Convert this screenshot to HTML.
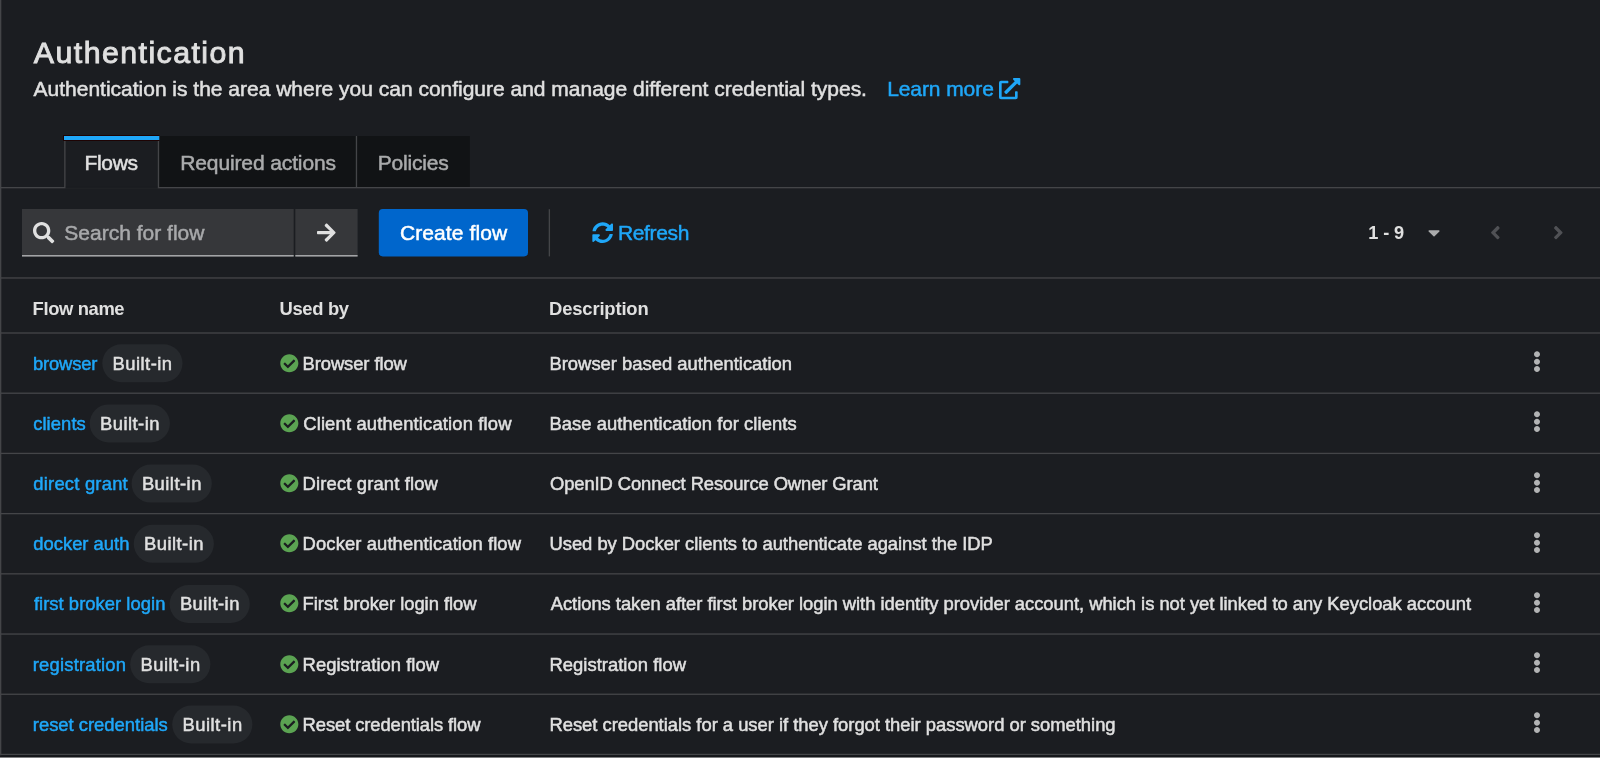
<!DOCTYPE html>
<html lang="en"><head><meta charset="utf-8"><title>Authentication</title>
<style>
html,body{margin:0;padding:0;background:#1b1d21;}
body{width:1600px;height:758px;position:relative;overflow:hidden;font-family:"Liberation Sans",sans-serif;}
.t{position:absolute;display:block;margin:0;white-space:nowrap;will-change:transform;}
.r{position:absolute;}
svg{display:block;overflow:visible}
</style></head><body>
<svg style="position:absolute;left:0;top:0" width="1600" height="758" viewBox="0 0 1600 758">
<rect x="0.00" y="0.00" width="1.33" height="758.00" fill="#444548"/>
<rect x="159.20" y="136.00" width="310.60" height="51.20" fill="#111315"/>
<rect x="0.00" y="187.00" width="1600.00" height="1.33" fill="#444548"/>
<rect x="64.20" y="136.00" width="1.33" height="52.00" fill="#444548"/>
<rect x="157.80" y="136.00" width="1.33" height="52.00" fill="#444548"/>
<rect x="355.80" y="136.00" width="1.33" height="51.00" fill="#444548"/>
<rect x="65.50" y="186.80" width="92.30" height="1.80" fill="#1b1d21"/>
<rect x="63.00" y="135.00" width="96.30" height="6.00" fill="#1e0303"/>
<rect x="64.00" y="136.00" width="95.30" height="4.00" fill="#1fa7f8"/>
<rect x="22.00" y="209.00" width="271.70" height="47.50" fill="#36373a"/>
<rect x="22.00" y="255.10" width="271.70" height="1.40" fill="#b0b1b3"/>
<rect x="295.30" y="209.00" width="62.30" height="47.50" fill="#36373a"/>
<rect x="295.30" y="255.10" width="62.30" height="1.40" fill="#b0b1b3"/>
<rect x="378.80" y="208.90" width="149.20" height="47.50" fill="#0066cc" rx="4"/>
<rect x="548.70" y="209.20" width="1.33" height="47.20" fill="#444548"/>
<rect x="0.00" y="277.30" width="1600.00" height="1.33" fill="#444548"/>
<rect x="0.00" y="332.33" width="1600.00" height="1.33" fill="#444548"/>
<rect x="0.00" y="392.54" width="1600.00" height="1.33" fill="#444548"/>
<rect x="0.00" y="452.75" width="1600.00" height="1.33" fill="#444548"/>
<rect x="0.00" y="512.96" width="1600.00" height="1.33" fill="#444548"/>
<rect x="0.00" y="573.17" width="1600.00" height="1.33" fill="#444548"/>
<rect x="0.00" y="633.38" width="1600.00" height="1.33" fill="#444548"/>
<rect x="0.00" y="693.59" width="1600.00" height="1.33" fill="#444548"/>
<rect x="0.00" y="753.80" width="1600.00" height="1.33" fill="#444548"/>
<rect x="102.30" y="344.20" width="80.20" height="38.00" fill="#26292d" rx="19"/>
<rect x="89.70" y="404.41" width="80.20" height="38.00" fill="#26292d" rx="19"/>
<rect x="131.60" y="464.62" width="80.20" height="38.00" fill="#26292d" rx="19"/>
<rect x="133.70" y="524.83" width="80.20" height="38.00" fill="#26292d" rx="19"/>
<rect x="169.60" y="585.04" width="80.20" height="38.00" fill="#26292d" rx="19"/>
<rect x="130.20" y="645.25" width="80.20" height="38.00" fill="#26292d" rx="19"/>
<rect x="172.20" y="705.46" width="80.20" height="38.00" fill="#26292d" rx="19"/>
<rect x="0.00" y="755.30" width="1600.00" height="1.80" fill="#15161a"/>
<rect x="0.00" y="757.00" width="1600.00" height="1.00" fill="#7d7e80"/>
</svg>
<svg style="position:absolute;left:32.70px;top:221.70px" width="21.33" height="21.33" viewBox="0 0 512 512"><path fill="#e0e0e0" d="M505 442.7L405.3 343c-4.5-4.5-10.6-7-17-7H372c27.6-35.3 44-79.700 44-128C416 93.100 322.900 0 208 0S0 93.100 0 208s93.100 208 208 208c48.300 0 92.700-16.400 128-44v16.300c0 6.400 2.500 12.500 7 17l99.700 99.700c9.400 9.400 24.600 9.400 33.900 0l28.300-28.300c9.400-9.400 9.400-24.600.1-34zM208 336c-70.700 0-128-57.200-128-128 0-70.700 57.200-128 128-128 70.700 0 128 57.200 128 128 0 70.700-57.200 128-128 128z"/></svg>
<svg style="position:absolute;left:316.80px;top:221.50px" width="18.67" height="21.33" viewBox="0 0 448 512"><path fill="#e0e0e0" d="M190.5 66.9l22.200-22.200c9.400-9.400 24.600-9.400 33.900 0L441 239c9.400 9.400 9.400 24.600 0 33.900L246.600 467.300c-9.400 9.400-24.600 9.400-33.900 0l-22.200-22.200c-9.500-9.500-9.300-25 .4-34.300L311.400 296H24c-13.300 0-24-10.700-24-24v-32c0-13.300 10.700-24 24-24h287.400L190.900 101.200c-9.800-9.300-10-24.800-.4-34.300z"/></svg>
<svg style="position:absolute;left:591.70px;top:222.00px" width="21.33" height="21.33" viewBox="0 0 512 512"><path fill="#1fa7f8" d="M370.72 133.28C339.458 104.008 298.888 87.962 255.848 88c-77.458.068-144.328 53.178-162.791 126.850-1.344 5.363-6.122 9.150-11.651 9.150H24.103c-7.498 0-13.194-6.807-11.807-14.176C33.933 94.924 134.813 8 256 8c66.448 0 126.791 26.136 171.315 68.685L463.030 40.970C478.149 25.851 504 36.559 504 57.941V192c0 13.255-10.745 24-24 24H345.941c-21.382 0-32.090-25.851-16.971-40.971l41.750-41.749zM32 296h134.059c21.382 0 32.090 25.851 16.971 40.971l-41.750 41.750c31.262 29.273 71.835 45.319 114.876 45.280 77.418-.070 144.315-53.144 162.787-126.849 1.344-5.363 6.122-9.150 11.651-9.150h57.304c7.498 0 13.194 6.807 11.807 14.176C478.067 417.076 377.187 504 256 504c-66.448 0-126.791-26.136-171.315-68.685L48.970 471.030C33.851 486.149 8 475.441 8 454.059V320c0-13.255 10.745-24 24-24z"/></svg>
<svg style="position:absolute;left:998.80px;top:77.60px" width="21.33" height="21.33" viewBox="0 0 512 512"><path fill="#1fa7f8" d="M432 320H400a16 16 0 0 0-16 16V448H64V128H208a16 16 0 0 0 16-16V80a16 16 0 0 0-16-16H48A48 48 0 0 0 0 112V464a48 48 0 0 0 48 48H400a48 48 0 0 0 48-48V336A16 16 0 0 0 432 320ZM488 0h-128c-21.370 0-32.050 25.910-17 41l35.730 35.730L135 320.370a24 24 0 0 0 0 34L157.670 377a24 24 0 0 0 34 0L435.280 133.320 471 169c15 15 41 4.500 41-17V24A24 24 0 0 0 488 0Z"/></svg>
<svg style="position:absolute;left:1427.75px;top:222.90px" width="12.06" height="19.30" viewBox="0 0 320 512"><path fill="#aaabac" d="M31.300 192h257.300c17.800 0 26.700 21.500 14.100 34.100L174.100 354.800c-7.800 7.800-20.500 7.800-28.300 0L17.200 226.100C4.600 213.500 13.500 192 31.300 192z"/></svg>
<svg style="position:absolute;left:1490.00px;top:222.00px" width="10.67" height="21.33" viewBox="0 0 256 512"><path fill="#505155" d="M31.700 239l136-136c9.400-9.400 24.600-9.400 33.900 0l22.600 22.600c9.400 9.400 9.400 24.600 0 33.900L127.900 256l96.400 96.400c9.400 9.400 9.400 24.600 0 33.900L201.700 409c-9.400 9.400-24.600 9.400-33.900 0l-136-136c-9.500-9.400-9.500-24.600-.1-34z"/></svg>
<svg style="position:absolute;left:1552.60px;top:222.00px" width="10.67" height="21.33" viewBox="0 0 256 512"><path fill="#505155" d="M224.300 273l-136 136c-9.400 9.400-24.600 9.400-33.900 0l-22.600-22.600c-9.400-9.400-9.400-24.600 0-33.900l96.400-96.400-96.400-96.400c-9.400-9.400-9.400-24.600 0-33.900L54.300 103c9.400-9.400 24.600-9.400 33.900 0l136 136c9.500 9.400 9.500 24.600.1 34z"/></svg>
<svg style="position:absolute;left:279.60px;top:353.60px" width="18.67" height="18.67" viewBox="0 0 512 512"><path fill="#5ba352" d="M504 256c0 136.967-111.033 248-248 248S8 392.967 8 256 119.033 8 256 8s248 111.033 248 248zM227.314 387.314l184-184c6.248-6.248 6.248-16.379 0-22.627l-22.627-22.627c-6.248-6.249-16.379-6.249-22.628 0L216 308.118l-70.059-70.059c-6.248-6.248-16.379-6.248-22.628 0l-22.627 22.627c-6.248 6.248-6.248 16.379 0 22.627l104 104c6.249 6.249 16.379 6.249 22.628.001z"/></svg>
<svg style="position:absolute;left:1533.10px;top:351.20px" width="8.00" height="21.33" viewBox="0 0 192 512"><path fill="#b2b3b4" d="M96 184c39.800 0 72 32.200 72 72s-32.200 72-72 72-72-32.200-72-72 32.200-72 72-72zM24 80c0 39.800 32.200 72 72 72s72-32.200 72-72S135.800 8 96 8 24 40.200 24 80zm0 352c0 39.800 32.200 72 72 72s72-32.200 72-72-32.200-72-72-72-72 32.200-72 72z"/></svg>
<svg style="position:absolute;left:279.60px;top:413.81px" width="18.67" height="18.67" viewBox="0 0 512 512"><path fill="#5ba352" d="M504 256c0 136.967-111.033 248-248 248S8 392.967 8 256 119.033 8 256 8s248 111.033 248 248zM227.314 387.314l184-184c6.248-6.248 6.248-16.379 0-22.627l-22.627-22.627c-6.248-6.249-16.379-6.249-22.628 0L216 308.118l-70.059-70.059c-6.248-6.248-16.379-6.248-22.628 0l-22.627 22.627c-6.248 6.248-6.248 16.379 0 22.627l104 104c6.249 6.249 16.379 6.249 22.628.001z"/></svg>
<svg style="position:absolute;left:1533.10px;top:411.41px" width="8.00" height="21.33" viewBox="0 0 192 512"><path fill="#b2b3b4" d="M96 184c39.800 0 72 32.200 72 72s-32.200 72-72 72-72-32.200-72-72 32.200-72 72-72zM24 80c0 39.800 32.200 72 72 72s72-32.200 72-72S135.800 8 96 8 24 40.200 24 80zm0 352c0 39.800 32.200 72 72 72s72-32.200 72-72-32.200-72-72-72-72 32.200-72 72z"/></svg>
<svg style="position:absolute;left:279.60px;top:474.02px" width="18.67" height="18.67" viewBox="0 0 512 512"><path fill="#5ba352" d="M504 256c0 136.967-111.033 248-248 248S8 392.967 8 256 119.033 8 256 8s248 111.033 248 248zM227.314 387.314l184-184c6.248-6.248 6.248-16.379 0-22.627l-22.627-22.627c-6.248-6.249-16.379-6.249-22.628 0L216 308.118l-70.059-70.059c-6.248-6.248-16.379-6.248-22.628 0l-22.627 22.627c-6.248 6.248-6.248 16.379 0 22.627l104 104c6.249 6.249 16.379 6.249 22.628.001z"/></svg>
<svg style="position:absolute;left:1533.10px;top:471.62px" width="8.00" height="21.33" viewBox="0 0 192 512"><path fill="#b2b3b4" d="M96 184c39.800 0 72 32.200 72 72s-32.200 72-72 72-72-32.200-72-72 32.200-72 72-72zM24 80c0 39.800 32.200 72 72 72s72-32.200 72-72S135.800 8 96 8 24 40.200 24 80zm0 352c0 39.800 32.200 72 72 72s72-32.200 72-72-32.200-72-72-72-72 32.200-72 72z"/></svg>
<svg style="position:absolute;left:279.60px;top:534.23px" width="18.67" height="18.67" viewBox="0 0 512 512"><path fill="#5ba352" d="M504 256c0 136.967-111.033 248-248 248S8 392.967 8 256 119.033 8 256 8s248 111.033 248 248zM227.314 387.314l184-184c6.248-6.248 6.248-16.379 0-22.627l-22.627-22.627c-6.248-6.249-16.379-6.249-22.628 0L216 308.118l-70.059-70.059c-6.248-6.248-16.379-6.248-22.628 0l-22.627 22.627c-6.248 6.248-6.248 16.379 0 22.627l104 104c6.249 6.249 16.379 6.249 22.628.001z"/></svg>
<svg style="position:absolute;left:1533.10px;top:531.83px" width="8.00" height="21.33" viewBox="0 0 192 512"><path fill="#b2b3b4" d="M96 184c39.800 0 72 32.200 72 72s-32.200 72-72 72-72-32.200-72-72 32.200-72 72-72zM24 80c0 39.800 32.200 72 72 72s72-32.200 72-72S135.800 8 96 8 24 40.200 24 80zm0 352c0 39.800 32.200 72 72 72s72-32.200 72-72-32.200-72-72-72-72 32.200-72 72z"/></svg>
<svg style="position:absolute;left:279.60px;top:594.44px" width="18.67" height="18.67" viewBox="0 0 512 512"><path fill="#5ba352" d="M504 256c0 136.967-111.033 248-248 248S8 392.967 8 256 119.033 8 256 8s248 111.033 248 248zM227.314 387.314l184-184c6.248-6.248 6.248-16.379 0-22.627l-22.627-22.627c-6.248-6.249-16.379-6.249-22.628 0L216 308.118l-70.059-70.059c-6.248-6.248-16.379-6.248-22.628 0l-22.627 22.627c-6.248 6.248-6.248 16.379 0 22.627l104 104c6.249 6.249 16.379 6.249 22.628.001z"/></svg>
<svg style="position:absolute;left:1533.10px;top:592.04px" width="8.00" height="21.33" viewBox="0 0 192 512"><path fill="#b2b3b4" d="M96 184c39.800 0 72 32.200 72 72s-32.200 72-72 72-72-32.200-72-72 32.200-72 72-72zM24 80c0 39.800 32.200 72 72 72s72-32.200 72-72S135.800 8 96 8 24 40.200 24 80zm0 352c0 39.800 32.200 72 72 72s72-32.200 72-72-32.200-72-72-72-72 32.200-72 72z"/></svg>
<svg style="position:absolute;left:279.60px;top:654.65px" width="18.67" height="18.67" viewBox="0 0 512 512"><path fill="#5ba352" d="M504 256c0 136.967-111.033 248-248 248S8 392.967 8 256 119.033 8 256 8s248 111.033 248 248zM227.314 387.314l184-184c6.248-6.248 6.248-16.379 0-22.627l-22.627-22.627c-6.248-6.249-16.379-6.249-22.628 0L216 308.118l-70.059-70.059c-6.248-6.248-16.379-6.248-22.628 0l-22.627 22.627c-6.248 6.248-6.248 16.379 0 22.627l104 104c6.249 6.249 16.379 6.249 22.628.001z"/></svg>
<svg style="position:absolute;left:1533.10px;top:652.25px" width="8.00" height="21.33" viewBox="0 0 192 512"><path fill="#b2b3b4" d="M96 184c39.800 0 72 32.200 72 72s-32.200 72-72 72-72-32.200-72-72 32.200-72 72-72zM24 80c0 39.800 32.200 72 72 72s72-32.200 72-72S135.800 8 96 8 24 40.200 24 80zm0 352c0 39.800 32.200 72 72 72s72-32.200 72-72-32.200-72-72-72-72 32.200-72 72z"/></svg>
<svg style="position:absolute;left:279.60px;top:714.86px" width="18.67" height="18.67" viewBox="0 0 512 512"><path fill="#5ba352" d="M504 256c0 136.967-111.033 248-248 248S8 392.967 8 256 119.033 8 256 8s248 111.033 248 248zM227.314 387.314l184-184c6.248-6.248 6.248-16.379 0-22.627l-22.627-22.627c-6.248-6.249-16.379-6.249-22.628 0L216 308.118l-70.059-70.059c-6.248-6.248-16.379-6.248-22.628 0l-22.627 22.627c-6.248 6.248-6.248 16.379 0 22.627l104 104c6.249 6.249 16.379 6.249 22.628.001z"/></svg>
<svg style="position:absolute;left:1533.10px;top:712.46px" width="8.00" height="21.33" viewBox="0 0 192 512"><path fill="#b2b3b4" d="M96 184c39.800 0 72 32.200 72 72s-32.200 72-72 72-72-32.200-72-72 32.200-72 72-72zM24 80c0 39.800 32.200 72 72 72s72-32.200 72-72S135.800 8 96 8 24 40.200 24 80zm0 352c0 39.800 32.200 72 72 72s72-32.200 72-72-32.200-72-72-72-72 32.200-72 72z"/></svg>
<h1 class="t" style="left:33px;top:30px;padding-left:0.80px;font-size:30.3px;line-height:45px;letter-spacing:1.452px;color:#e0e0e0;font-weight:400;-webkit-text-stroke:0.9px #e0e0e0">Authentication</h1>
<p class="t" style="left:33px;top:73px;padding-left:0.62px;font-size:21px;line-height:32px;letter-spacing:-0.011px;color:#e0e0e0;font-weight:400;-webkit-text-stroke:0.5px #e0e0e0">Authentication is the area where you can configure and manage different credential types.</p>
<a class="t" style="left:887px;top:73px;padding-left:0.17px;font-size:21px;line-height:32px;letter-spacing:-0.082px;color:#1fa7f8;font-weight:400;-webkit-text-stroke:0.5px #1fa7f8">Learn more</a>
<div class="t" style="left:84px;top:147px;padding-left:0.39px;font-size:21px;line-height:32px;letter-spacing:-0.291px;color:#e0e0e0;font-weight:400;-webkit-text-stroke:0.5px #e0e0e0">Flows</div>
<div class="t" style="left:180px;top:147px;padding-left:0.22px;font-size:21px;line-height:32px;letter-spacing:-0.120px;color:#aaabac;font-weight:400;-webkit-text-stroke:0.5px #aaabac">Required actions</div>
<div class="t" style="left:377px;top:147px;padding-left:0.69px;font-size:21px;line-height:32px;letter-spacing:-0.188px;color:#aaabac;font-weight:400;-webkit-text-stroke:0.5px #aaabac">Policies</div>
<div class="t" style="left:64px;top:217px;padding-left:0.30px;font-size:21px;line-height:32px;letter-spacing:0.008px;color:#a8a9ab;font-weight:400;-webkit-text-stroke:0.5px #a8a9ab">Search for flow</div>
<div class="t" style="left:399px;top:217px;padding-left:0.98px;font-size:21px;line-height:32px;letter-spacing:0.094px;color:#ffffff;font-weight:400;-webkit-text-stroke:0.5px #ffffff">Create flow</div>
<div class="t" style="left:617px;top:217px;padding-left:0.93px;font-size:21px;line-height:32px;letter-spacing:-0.336px;color:#1fa7f8;font-weight:400;-webkit-text-stroke:0.5px #1fa7f8">Refresh</div>
<div class="t" style="left:1368px;top:220px;padding-left:0.31px;font-size:18.2px;line-height:27px;letter-spacing:-0.149px;color:#e0e0e0;font-weight:700">1 - 9</div>
<div class="t" style="left:32px;top:295px;padding-left:0.61px;font-size:18.4px;line-height:28px;letter-spacing:-0.380px;color:#e0e0e0;font-weight:700">Flow name</div>
<div class="t" style="left:279px;top:295px;padding-left:0.44px;font-size:18.4px;line-height:28px;letter-spacing:-0.319px;color:#e0e0e0;font-weight:700">Used by</div>
<div class="t" style="left:549px;top:295px;padding-left:0.02px;font-size:18.4px;line-height:28px;letter-spacing:-0.151px;color:#e0e0e0;font-weight:700">Description</div>
<a class="t" style="left:32px;top:350px;padding-left:0.98px;font-size:18.4px;line-height:28px;letter-spacing:-0.156px;color:#1fa7f8;font-weight:400;-webkit-text-stroke:0.5px #1fa7f8">browser</a>
<span class="t" style="left:112px;top:350px;padding-left:0.52px;font-size:18.4px;line-height:28px;letter-spacing:0.478px;color:#e0e0e0;font-weight:400;-webkit-text-stroke:0.5px #e0e0e0">Built-in</span>
<div class="t" style="left:302px;top:350px;padding-left:0.62px;font-size:18.4px;line-height:28px;letter-spacing:-0.097px;color:#e0e0e0;font-weight:400;-webkit-text-stroke:0.5px #e0e0e0">Browser flow</div>
<div class="t" style="left:549px;top:350px;padding-left:0.44px;font-size:18.4px;line-height:28px;letter-spacing:0.010px;color:#e0e0e0;font-weight:400;-webkit-text-stroke:0.5px #e0e0e0">Browser based authentication</div>
<a class="t" style="left:33px;top:410px;padding-left:0.17px;font-size:18.4px;line-height:28px;letter-spacing:0.088px;color:#1fa7f8;font-weight:400;-webkit-text-stroke:0.5px #1fa7f8">clients</a>
<span class="t" style="left:99px;top:410px;padding-left:0.93px;font-size:18.4px;line-height:28px;letter-spacing:0.485px;color:#e0e0e0;font-weight:400;-webkit-text-stroke:0.5px #e0e0e0">Built-in</span>
<div class="t" style="left:303px;top:410px;padding-left:0.22px;font-size:18.4px;line-height:28px;letter-spacing:0.150px;color:#e0e0e0;font-weight:400;-webkit-text-stroke:0.5px #e0e0e0">Client authentication flow</div>
<div class="t" style="left:549px;top:410px;padding-left:0.44px;font-size:18.4px;line-height:28px;letter-spacing:0.060px;color:#e0e0e0;font-weight:400;-webkit-text-stroke:0.5px #e0e0e0">Base authentication for clients</div>
<a class="t" style="left:33px;top:470px;padding-left:0.31px;font-size:18.4px;line-height:28px;letter-spacing:0.218px;color:#1fa7f8;font-weight:400;-webkit-text-stroke:0.5px #1fa7f8">direct grant</a>
<span class="t" style="left:141px;top:470px;padding-left:0.89px;font-size:18.4px;line-height:28px;letter-spacing:0.472px;color:#e0e0e0;font-weight:400;-webkit-text-stroke:0.5px #e0e0e0">Built-in</span>
<div class="t" style="left:302px;top:470px;padding-left:0.62px;font-size:18.4px;line-height:28px;letter-spacing:0.150px;color:#e0e0e0;font-weight:400;-webkit-text-stroke:0.5px #e0e0e0">Direct grant flow</div>
<div class="t" style="left:549px;top:470px;padding-left:0.96px;font-size:18.4px;line-height:28px;letter-spacing:-0.093px;color:#e0e0e0;font-weight:400;-webkit-text-stroke:0.5px #e0e0e0">OpenID Connect Resource Owner Grant</div>
<a class="t" style="left:33px;top:530px;padding-left:0.31px;font-size:18.4px;line-height:28px;letter-spacing:-0.004px;color:#1fa7f8;font-weight:400;-webkit-text-stroke:0.5px #1fa7f8">docker auth</a>
<span class="t" style="left:143px;top:530px;padding-left:0.93px;font-size:18.4px;line-height:28px;letter-spacing:0.485px;color:#e0e0e0;font-weight:400;-webkit-text-stroke:0.5px #e0e0e0">Built-in</span>
<div class="t" style="left:302px;top:530px;padding-left:0.62px;font-size:18.4px;line-height:28px;letter-spacing:0.107px;color:#e0e0e0;font-weight:400;-webkit-text-stroke:0.5px #e0e0e0">Docker authentication flow</div>
<div class="t" style="left:549px;top:530px;padding-left:0.47px;font-size:18.4px;line-height:28px;letter-spacing:-0.025px;color:#e0e0e0;font-weight:400;-webkit-text-stroke:0.5px #e0e0e0">Used by Docker clients to authenticate against the IDP</div>
<a class="t" style="left:33px;top:590px;padding-left:0.92px;font-size:18.4px;line-height:28px;letter-spacing:0.037px;color:#1fa7f8;font-weight:400;-webkit-text-stroke:0.5px #1fa7f8">first broker login</a>
<span class="t" style="left:179px;top:590px;padding-left:0.89px;font-size:18.4px;line-height:28px;letter-spacing:0.472px;color:#e0e0e0;font-weight:400;-webkit-text-stroke:0.5px #e0e0e0">Built-in</span>
<div class="t" style="left:302px;top:590px;padding-left:0.62px;font-size:18.4px;line-height:28px;letter-spacing:-0.039px;color:#e0e0e0;font-weight:400;-webkit-text-stroke:0.5px #e0e0e0">First broker login flow</div>
<div class="t" style="left:550px;top:590px;padding-left:0.70px;font-size:18.4px;line-height:28px;letter-spacing:-0.032px;color:#e0e0e0;font-weight:400;-webkit-text-stroke:0.5px #e0e0e0">Actions taken after first broker login with identity provider account, which is not yet linked to any Keycloak account</div>
<a class="t" style="left:32px;top:651px;padding-left:0.80px;font-size:18.4px;line-height:28px;letter-spacing:0.198px;color:#1fa7f8;font-weight:400;-webkit-text-stroke:0.5px #1fa7f8">registration</a>
<span class="t" style="left:140px;top:651px;padding-left:0.47px;font-size:18.4px;line-height:28px;letter-spacing:0.496px;color:#e0e0e0;font-weight:400;-webkit-text-stroke:0.5px #e0e0e0">Built-in</span>
<div class="t" style="left:302px;top:651px;padding-left:0.62px;font-size:18.4px;line-height:28px;letter-spacing:0.026px;color:#e0e0e0;font-weight:400;-webkit-text-stroke:0.5px #e0e0e0">Registration flow</div>
<div class="t" style="left:549px;top:651px;padding-left:0.44px;font-size:18.4px;line-height:28px;letter-spacing:0.037px;color:#e0e0e0;font-weight:400;-webkit-text-stroke:0.5px #e0e0e0">Registration flow</div>
<a class="t" style="left:32px;top:711px;padding-left:0.80px;font-size:18.4px;line-height:28px;letter-spacing:0.001px;color:#1fa7f8;font-weight:400;-webkit-text-stroke:0.5px #1fa7f8">reset credentials</a>
<span class="t" style="left:182px;top:711px;padding-left:0.47px;font-size:18.4px;line-height:28px;letter-spacing:0.496px;color:#e0e0e0;font-weight:400;-webkit-text-stroke:0.5px #e0e0e0">Built-in</span>
<div class="t" style="left:302px;top:711px;padding-left:0.62px;font-size:18.4px;line-height:28px;letter-spacing:-0.099px;color:#e0e0e0;font-weight:400;-webkit-text-stroke:0.5px #e0e0e0">Reset credentials flow</div>
<div class="t" style="left:549px;top:711px;padding-left:0.44px;font-size:18.4px;line-height:28px;letter-spacing:-0.017px;color:#e0e0e0;font-weight:400;-webkit-text-stroke:0.5px #e0e0e0">Reset credentials for a user if they forgot their password or something</div>
</body></html>
